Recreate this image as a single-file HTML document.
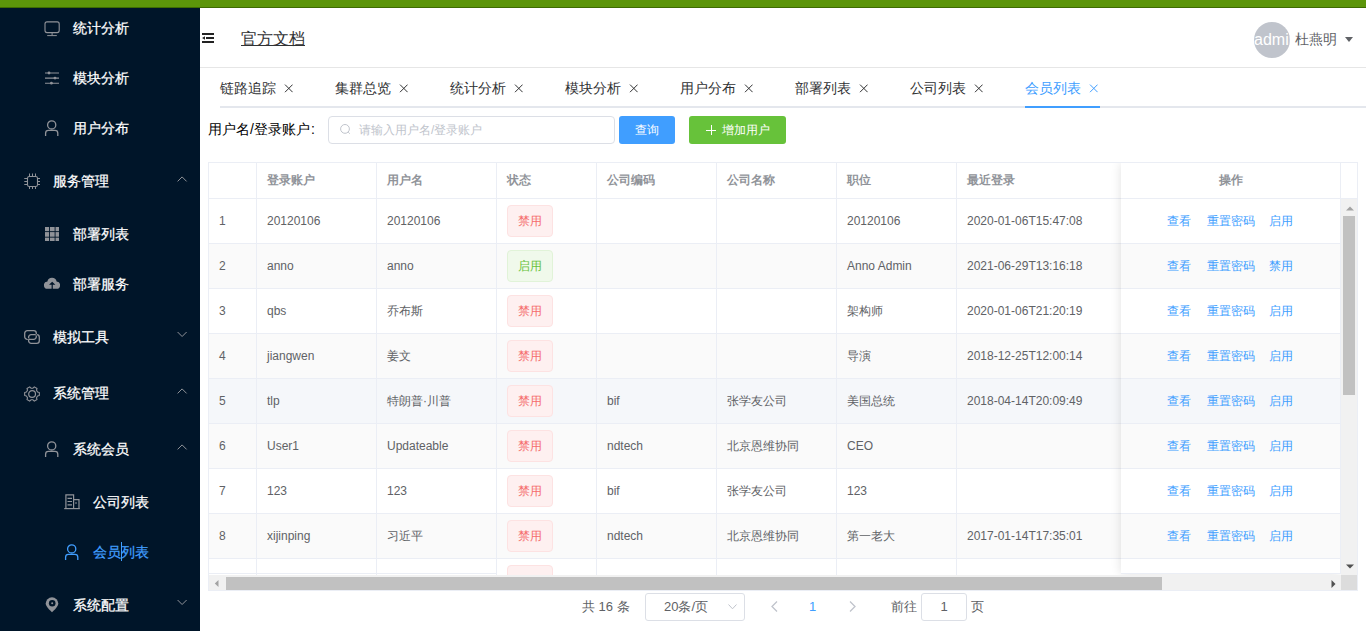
<!DOCTYPE html><html><head><meta charset="utf-8"><style>
*{box-sizing:border-box;margin:0;padding:0}
html,body{width:1366px;height:631px;overflow:hidden;background:#fff;font-family:"Liberation Sans",sans-serif;color:#606266}
.abs{position:absolute}
svg{display:block}
#topbar{left:0;top:0;width:1366px;height:8px;background:#5c950a;border-bottom:1px solid #3e6b02}
#side{left:0;top:8px;width:200px;height:623px;background:#001529;overflow:hidden}
.mt{position:absolute;font-size:14px;line-height:20px;color:#fff;white-space:nowrap;-webkit-text-stroke:0.25px #fff}
.mt.on{-webkit-text-stroke:0.25px #409eff}
.mt.on{color:#409eff}
.ic{position:absolute}
#header{left:200px;top:8px;width:1166px;height:60px;border-bottom:1px solid #e6e6e6}
.tab{position:absolute;top:78px;font-size:14px;line-height:20px;color:#303133;white-space:nowrap}
.tab.on{color:#409eff}
.cell{position:absolute;font-size:12px;line-height:20px;white-space:nowrap;color:#606266}
.th{position:absolute;font-size:12px;line-height:20px;white-space:nowrap;color:#909399;font-weight:bold}
.tag{position:absolute;width:46px;height:32px;border:1px solid #fde2e2;background:#fef0f0;color:#f56c6c;border-radius:4px;font-size:12px;line-height:30px;text-align:center}
.tag.ok{border-color:#e1f3d8;background:#f0f9eb;color:#67c23a}
.lnk{position:absolute;font-size:12px;line-height:20px;color:#409eff;white-space:nowrap}
</style></head><body>
<div id="topbar" class="abs"></div>
<div id="side" class="abs">
<div class="mt" style="left:73px;top:10px">统计分析</div>
<svg class="ic" style="left:44px;top:12px" width="16" height="17" viewBox="0 0 16 17"><rect x="1" y="1.9" width="14.2" height="10.7" rx="2" fill="none" stroke="#909399" stroke-width="1.1"/><path d="M8.1 12.6v2.6M3.2 15.6h9.6" stroke="#909399" stroke-width="1"/></svg>
<div class="mt" style="left:73px;top:60px">模块分析</div>
<svg class="ic" style="left:44px;top:62px" width="16" height="16" viewBox="0 0 16 16"><path d="M1 3h14M1 8.1h14M1 13.2h14" stroke="#909399" stroke-width="1.1"/><circle cx="5" cy="3" r="1.4" fill="#909399"/><circle cx="11" cy="8.1" r="1.4" fill="#909399"/><circle cx="7.4" cy="13.2" r="1.4" fill="#909399"/></svg>
<div class="mt" style="left:73px;top:110px">用户分布</div>
<svg class="ic" style="left:44px;top:112px" width="16" height="16" viewBox="0 0 16 16"><circle cx="7.7" cy="4.9" r="4.1" fill="none" stroke="#909399" stroke-width="1.3"/><path d="M1.6 16V13.2a2.8 2.8 0 0 1 2.8-2.8h6.6a2.8 2.8 0 0 1 2.8 2.8V16" fill="none" stroke="#909399" stroke-width="1.3"/></svg>
<div class="mt" style="left:53px;top:163px">服务管理</div>
<svg class="ic" style="left:24px;top:165px" width="16" height="16" viewBox="0 0 16 16"><rect x="3.5" y="3.5" width="10" height="10" rx="1.8" fill="none" stroke="#909399" stroke-width="1.1"/><path d="M5.5 0.5v3M8.5 0.5v3M11.5 0.5v3M5.5 13.5v3M8.5 13.5v3M11.5 13.5v3M0.3 5.5h3.2M0.3 8.5h3.2M0.3 11.5h3.2M13.5 5.5h3M13.5 8.5h3M13.5 11.5h3" stroke="#909399" stroke-width="1"/></svg>
<svg class="ic" style="left:177px;top:168px" width="11" height="7" viewBox="0 0 11 7"><path d="M0.6 5.4L5.1 0.9L9.6 5.4" fill="none" stroke="#909399" stroke-width="1"/></svg>
<div class="mt" style="left:73px;top:216px">部署列表</div>
<svg class="ic" style="left:45px;top:219px" width="14" height="14" viewBox="0 0 14 14"><rect x="0" y="0" width="14.3" height="14.3" fill="#909399"/><path d="M4.5 0v14.3M10.1 0v14.3M0 4.6h14.3M0 10.2h14.3" stroke="#001529" stroke-width="0.9"/></svg>
<div class="mt" style="left:73px;top:266px">部署服务</div>
<svg class="ic" style="left:44px;top:268px" width="16" height="13" viewBox="0 0 16 13"><path d="M3.6 12.8A3.6 3.6 0 0 1 3.4 5.6 4.7 4.7 0 0 1 12.6 5.6 3.6 3.6 0 0 1 12.4 12.8z" fill="#909399"/><path d="M8.2 5.8L5 8.8h2.6v4.2h1.2V8.8h2.6z" fill="#001529"/></svg>
<div class="mt" style="left:53px;top:319px">模拟工具</div>
<svg class="ic" style="left:24px;top:322px" width="16" height="14" viewBox="0 0 16 14"><rect x="0.7" y="0.7" width="11.6" height="8.6" rx="2.6" fill="none" stroke="#909399" stroke-width="1.3"/><rect x="4.6" y="4.7" width="10.7" height="8.6" rx="2.6" fill="none" stroke="#909399" stroke-width="1.3"/><path d="M3.2 8.6h1.4M12.3 4.3v1.2" stroke="#001529" stroke-width="1.2"/></svg>
<svg class="ic" style="left:177px;top:323px" width="11" height="7" viewBox="0 0 11 7"><path d="M0.6 1L5.1 5.5L9.6 1" fill="none" stroke="#909399" stroke-width="1"/></svg>
<div class="mt" style="left:53px;top:375px">系统管理</div>
<svg class="ic" style="left:24px;top:378px" width="16" height="16" viewBox="0 0 16 16"><path d="M15.34 6.44L15.34 9.56L13.54 10.02L12.52 11.79L13.02 13.57L10.32 15.13L9.02 13.81L6.98 13.81L5.68 15.13L2.98 13.57L3.48 11.79L2.46 10.02L0.66 9.56L0.66 6.44L2.46 5.98L3.48 4.21L2.98 2.43L5.68 0.87L6.98 2.19L9.02 2.19L10.32 0.87L13.02 2.43L12.52 4.21L13.54 5.98z" fill="none" stroke="#909399" stroke-width="1.1" stroke-linejoin="round"/><circle cx="8.1" cy="8" r="3.4" fill="none" stroke="#909399" stroke-width="1.2"/></svg>
<svg class="ic" style="left:177px;top:380px" width="11" height="7" viewBox="0 0 11 7"><path d="M0.6 5.4L5.1 0.9L9.6 5.4" fill="none" stroke="#909399" stroke-width="1"/></svg>
<div class="mt" style="left:73px;top:431px">系统会员</div>
<svg class="ic" style="left:44px;top:433px" width="16" height="16" viewBox="0 0 16 16"><circle cx="7.7" cy="4.9" r="4.1" fill="none" stroke="#909399" stroke-width="1.3"/><path d="M1.6 16V13.2a2.8 2.8 0 0 1 2.8-2.8h6.6a2.8 2.8 0 0 1 2.8 2.8V16" fill="none" stroke="#909399" stroke-width="1.3"/></svg>
<svg class="ic" style="left:177px;top:436px" width="11" height="7" viewBox="0 0 11 7"><path d="M0.6 5.4L5.1 0.9L9.6 5.4" fill="none" stroke="#909399" stroke-width="1"/></svg>
<div class="mt" style="left:93px;top:484px">公司列表</div>
<svg class="ic" style="left:64px;top:486px" width="16" height="16" viewBox="0 0 16 16"><path d="M0.2 14.6H15.8" stroke="#909399" stroke-width="1.2"/><path d="M1.9 14.5V0.8H9.6V14.5M9.6 5.6H15V14.5" fill="none" stroke="#909399" stroke-width="1.2"/><path d="M3.5 4.4H8M3.5 7.5H8M3.5 10.9H8M11 9H13" stroke="#909399" stroke-width="1.1"/></svg>
<div class="mt on" style="left:93px;top:534px">会员列表</div>
<svg class="ic" style="left:64px;top:536px" width="16" height="16" viewBox="0 0 16 16"><circle cx="7.7" cy="4.9" r="4.1" fill="none" stroke="#409eff" stroke-width="1.3"/><path d="M1.6 16V13.2a2.8 2.8 0 0 1 2.8-2.8h6.6a2.8 2.8 0 0 1 2.8 2.8V16" fill="none" stroke="#409eff" stroke-width="1.3"/></svg>
<div class="mt" style="left:73px;top:587px">系统配置</div>
<svg class="ic" style="left:45px;top:589px" width="14" height="16" viewBox="0 0 14 16"><path d="M7 0.3a6.3 6.3 0 0 1 6.3 6.3c0 3.6-6.3 8.6-6.3 8.6S0.7 10.2 0.7 6.6A6.3 6.3 0 0 1 7 0.3z" fill="#909399"/><circle cx="7.2" cy="6.2" r="3.3" fill="#001529"/><circle cx="7.2" cy="6.2" r="1" fill="#909399"/></svg>
<svg class="ic" style="left:177px;top:591px" width="11" height="7" viewBox="0 0 11 7"><path d="M0.6 1L5.1 5.5L9.6 1" fill="none" stroke="#909399" stroke-width="1"/></svg>
<div class="abs" style="left:121px;top:534px;width:1px;height:19px;background:#409eff"></div>
</div>
<div id="header" class="abs"></div>
<svg class="abs" style="left:202px;top:33px" width="12" height="10" viewBox="0 0 12 10"><path d="M0 0h12v2H0zM4 4h8v2H4zM0 8h12v2H0z" fill="#222"/><path d="M0 5L3 3.2v3.6z" fill="#222"/></svg>
<div class="abs" style="left:241px;top:29px;font-size:16px;line-height:20px;color:#303133;text-decoration:underline;white-space:nowrap">官方文档</div>
<div class="abs" style="left:1254px;top:22px;width:36px;height:36px;border-radius:50%;background:#c0c4cc;overflow:hidden;color:#fff;font-size:16px;line-height:36px;text-align:center;white-space:nowrap"><span style="position:absolute;left:0;top:0">admin</span></div>
<div class="abs" style="left:1295px;top:29px;font-size:14px;line-height:20px;color:#606266;white-space:nowrap">杜燕明</div>
<svg class="abs" style="left:1345px;top:37px" width="8" height="5" viewBox="0 0 8 5"><path d="M0 0h8L4 5z" fill="#606266"/></svg>
<div class="tab" style="left:220px">链路追踪</div>
<svg class="abs" style="left:284px;top:84px" width="9" height="9" viewBox="0 0 9 9"><path d="M1 0.6L8.6 8.2M8.6 0.6L1 8.2" stroke="#303133" stroke-width="1"/></svg>
<div class="tab" style="left:335px">集群总览</div>
<svg class="abs" style="left:399px;top:84px" width="9" height="9" viewBox="0 0 9 9"><path d="M1 0.6L8.6 8.2M8.6 0.6L1 8.2" stroke="#303133" stroke-width="1"/></svg>
<div class="tab" style="left:450px">统计分析</div>
<svg class="abs" style="left:514px;top:84px" width="9" height="9" viewBox="0 0 9 9"><path d="M1 0.6L8.6 8.2M8.6 0.6L1 8.2" stroke="#303133" stroke-width="1"/></svg>
<div class="tab" style="left:565px">模块分析</div>
<svg class="abs" style="left:629px;top:84px" width="9" height="9" viewBox="0 0 9 9"><path d="M1 0.6L8.6 8.2M8.6 0.6L1 8.2" stroke="#303133" stroke-width="1"/></svg>
<div class="tab" style="left:680px">用户分布</div>
<svg class="abs" style="left:744px;top:84px" width="9" height="9" viewBox="0 0 9 9"><path d="M1 0.6L8.6 8.2M8.6 0.6L1 8.2" stroke="#303133" stroke-width="1"/></svg>
<div class="tab" style="left:795px">部署列表</div>
<svg class="abs" style="left:859px;top:84px" width="9" height="9" viewBox="0 0 9 9"><path d="M1 0.6L8.6 8.2M8.6 0.6L1 8.2" stroke="#303133" stroke-width="1"/></svg>
<div class="tab" style="left:910px">公司列表</div>
<svg class="abs" style="left:974px;top:84px" width="9" height="9" viewBox="0 0 9 9"><path d="M1 0.6L8.6 8.2M8.6 0.6L1 8.2" stroke="#303133" stroke-width="1"/></svg>
<div class="tab on" style="left:1025px">会员列表</div>
<svg class="abs" style="left:1089px;top:84px" width="9" height="9" viewBox="0 0 9 9"><path d="M1 0.6L8.6 8.2M8.6 0.6L1 8.2" stroke="#409eff" stroke-width="1"/></svg>
<div class="abs" style="left:220px;top:106px;width:1146px;height:2px;background:#e4e7ed"></div>
<div class="abs" style="left:1025px;top:106px;width:75px;height:2px;background:#409eff"></div>
<div class="abs" style="left:208px;top:119px;font-size:14px;line-height:20px;color:#000;white-space:nowrap">用户名/登录账户<span style="margin-left:1px">:</span></div>
<div class="abs" style="left:328px;top:116px;width:287px;height:28px;border:1px solid #dcdfe6;border-radius:4px"></div>
<svg class="abs" style="left:340px;top:124px" width="12" height="12" viewBox="0 0 12 12"><circle cx="5" cy="4.9" r="4.4" fill="none" stroke="#c0c4cc" stroke-width="1"/><path d="M8.2 8.1L9.8 9.7" stroke="#c0c4cc" stroke-width="1"/></svg>
<div class="abs" style="left:359px;top:120px;font-size:12px;line-height:20px;color:#c0c4cc;white-space:nowrap">请输入用户名/登录账户</div>
<div class="abs" style="left:619px;top:116px;width:56px;height:28px;background:#409eff;border-radius:3px;color:#fff;font-size:12px;line-height:28px;text-align:center">查询</div>
<div class="abs" style="left:689px;top:116px;width:97px;height:28px;background:#67c23a;border-radius:3px"></div>
<svg class="abs" style="left:706px;top:125px" width="10" height="10" viewBox="0 0 10 10"><path d="M5.5 0v10M0 5.5h10" stroke="#fff" stroke-width="1"/></svg>
<div class="abs" style="left:722px;top:120px;font-size:12px;line-height:20px;color:#fff;white-space:nowrap">增加用户</div>
<div class="abs" style="left:208px;top:162px;width:1150px;height:429px;border:1px solid #ebeef5;overflow:hidden">
<div class="abs" style="left:0;top:36px;width:1150px;height:45px;background:#ffffff;border-bottom:1px solid #ebeef5"></div>
<div class="abs" style="left:0;top:81px;width:1150px;height:45px;background:#fafafa;border-bottom:1px solid #ebeef5"></div>
<div class="abs" style="left:0;top:126px;width:1150px;height:45px;background:#ffffff;border-bottom:1px solid #ebeef5"></div>
<div class="abs" style="left:0;top:171px;width:1150px;height:45px;background:#fafafa;border-bottom:1px solid #ebeef5"></div>
<div class="abs" style="left:0;top:216px;width:1150px;height:45px;background:#f5f7fa;border-bottom:1px solid #ebeef5"></div>
<div class="abs" style="left:0;top:261px;width:1150px;height:45px;background:#fafafa;border-bottom:1px solid #ebeef5"></div>
<div class="abs" style="left:0;top:306px;width:1150px;height:45px;background:#ffffff;border-bottom:1px solid #ebeef5"></div>
<div class="abs" style="left:0;top:351px;width:1150px;height:45px;background:#fafafa;border-bottom:1px solid #ebeef5"></div>
<div class="abs" style="left:0;top:396px;width:1150px;height:45px;background:#ffffff;border-bottom:1px solid #ebeef5"></div>
<div class="abs" style="left:47px;top:0;width:1px;height:420px;background:#ebeef5"></div>
<div class="abs" style="left:167px;top:0;width:1px;height:420px;background:#ebeef5"></div>
<div class="abs" style="left:287px;top:0;width:1px;height:420px;background:#ebeef5"></div>
<div class="abs" style="left:387px;top:0;width:1px;height:420px;background:#ebeef5"></div>
<div class="abs" style="left:507px;top:0;width:1px;height:420px;background:#ebeef5"></div>
<div class="abs" style="left:627px;top:0;width:1px;height:420px;background:#ebeef5"></div>
<div class="abs" style="left:747px;top:0;width:1px;height:420px;background:#ebeef5"></div>
<div class="abs" style="left:0;top:35px;width:1150px;height:1px;background:#ebeef5"></div>
<div class="th" style="left:58px;top:7px">登录账户</div>
<div class="th" style="left:178px;top:7px">用户名</div>
<div class="th" style="left:298px;top:7px">状态</div>
<div class="th" style="left:398px;top:7px">公司编码</div>
<div class="th" style="left:518px;top:7px">公司名称</div>
<div class="th" style="left:638px;top:7px">职位</div>
<div class="th" style="left:758px;top:7px">最近登录</div>
<div class="cell" style="left:10px;top:48px">1</div>
<div class="cell" style="left:58px;top:48px">20120106</div>
<div class="cell" style="left:178px;top:48px">20120106</div>
<div class="tag" style="left:298px;top:42px">禁用</div>
<div class="cell" style="left:638px;top:48px">20120106</div>
<div class="cell" style="left:758px;top:48px">2020-01-06T15:47:08</div>
<div class="cell" style="left:10px;top:93px">2</div>
<div class="cell" style="left:58px;top:93px">anno</div>
<div class="cell" style="left:178px;top:93px">anno</div>
<div class="tag ok" style="left:298px;top:87px">启用</div>
<div class="cell" style="left:638px;top:93px">Anno Admin</div>
<div class="cell" style="left:758px;top:93px">2021-06-29T13:16:18</div>
<div class="cell" style="left:10px;top:138px">3</div>
<div class="cell" style="left:58px;top:138px">qbs</div>
<div class="cell" style="left:178px;top:138px">乔布斯</div>
<div class="tag" style="left:298px;top:132px">禁用</div>
<div class="cell" style="left:638px;top:138px">架构师</div>
<div class="cell" style="left:758px;top:138px">2020-01-06T21:20:19</div>
<div class="cell" style="left:10px;top:183px">4</div>
<div class="cell" style="left:58px;top:183px">jiangwen</div>
<div class="cell" style="left:178px;top:183px">姜文</div>
<div class="tag" style="left:298px;top:177px">禁用</div>
<div class="cell" style="left:638px;top:183px">导演</div>
<div class="cell" style="left:758px;top:183px">2018-12-25T12:00:14</div>
<div class="cell" style="left:10px;top:228px">5</div>
<div class="cell" style="left:58px;top:228px">tlp</div>
<div class="cell" style="left:178px;top:228px">特朗普·川普</div>
<div class="tag" style="left:298px;top:222px">禁用</div>
<div class="cell" style="left:398px;top:228px">bif</div>
<div class="cell" style="left:518px;top:228px">张学友公司</div>
<div class="cell" style="left:638px;top:228px">美国总统</div>
<div class="cell" style="left:758px;top:228px">2018-04-14T20:09:49</div>
<div class="cell" style="left:10px;top:273px">6</div>
<div class="cell" style="left:58px;top:273px">User1</div>
<div class="cell" style="left:178px;top:273px">Updateable</div>
<div class="tag" style="left:298px;top:267px">禁用</div>
<div class="cell" style="left:398px;top:273px">ndtech</div>
<div class="cell" style="left:518px;top:273px">北京恩维协同</div>
<div class="cell" style="left:638px;top:273px">CEO</div>
<div class="cell" style="left:10px;top:318px">7</div>
<div class="cell" style="left:58px;top:318px">123</div>
<div class="cell" style="left:178px;top:318px">123</div>
<div class="tag" style="left:298px;top:312px">禁用</div>
<div class="cell" style="left:398px;top:318px">bif</div>
<div class="cell" style="left:518px;top:318px">张学友公司</div>
<div class="cell" style="left:638px;top:318px">123</div>
<div class="cell" style="left:10px;top:363px">8</div>
<div class="cell" style="left:58px;top:363px">xijinping</div>
<div class="cell" style="left:178px;top:363px">习近平</div>
<div class="tag" style="left:298px;top:357px">禁用</div>
<div class="cell" style="left:398px;top:363px">ndtech</div>
<div class="cell" style="left:518px;top:363px">北京恩维协同</div>
<div class="cell" style="left:638px;top:363px">第一老大</div>
<div class="cell" style="left:758px;top:363px">2017-01-14T17:35:01</div>
<div class="tag" style="left:298px;top:402px">禁用</div>
<div class="abs" style="left:0;top:410px;width:287px;height:1px;background:#ebeef5"></div>
<div class="abs" style="left:912px;top:0;width:220px;height:411px;background:#fff;box-shadow:0 0 10px rgba(0,0,0,.12);overflow:hidden">
<div class="abs" style="left:0;top:0;width:220px;height:36px;border-bottom:1px solid #ebeef5;border-right:1px solid #ebeef5"></div>
<div class="th" style="left:0;width:219px;text-align:center;top:7px">操作</div>
<div class="abs" style="left:0;top:36px;width:220px;height:45px;background:#ffffff;border-bottom:1px solid #ebeef5;border-right:1px solid #ebeef5"></div>
<div class="lnk" style="left:46px;top:48px">查看</div>
<div class="lnk" style="left:86px;top:48px">重置密码</div>
<div class="lnk" style="left:148px;top:48px">启用</div>
<div class="abs" style="left:0;top:81px;width:220px;height:45px;background:#fafafa;border-bottom:1px solid #ebeef5;border-right:1px solid #ebeef5"></div>
<div class="lnk" style="left:46px;top:93px">查看</div>
<div class="lnk" style="left:86px;top:93px">重置密码</div>
<div class="lnk" style="left:148px;top:93px">禁用</div>
<div class="abs" style="left:0;top:126px;width:220px;height:45px;background:#ffffff;border-bottom:1px solid #ebeef5;border-right:1px solid #ebeef5"></div>
<div class="lnk" style="left:46px;top:138px">查看</div>
<div class="lnk" style="left:86px;top:138px">重置密码</div>
<div class="lnk" style="left:148px;top:138px">启用</div>
<div class="abs" style="left:0;top:171px;width:220px;height:45px;background:#fafafa;border-bottom:1px solid #ebeef5;border-right:1px solid #ebeef5"></div>
<div class="lnk" style="left:46px;top:183px">查看</div>
<div class="lnk" style="left:86px;top:183px">重置密码</div>
<div class="lnk" style="left:148px;top:183px">启用</div>
<div class="abs" style="left:0;top:216px;width:220px;height:45px;background:#f5f7fa;border-bottom:1px solid #ebeef5;border-right:1px solid #ebeef5"></div>
<div class="lnk" style="left:46px;top:228px">查看</div>
<div class="lnk" style="left:86px;top:228px">重置密码</div>
<div class="lnk" style="left:148px;top:228px">启用</div>
<div class="abs" style="left:0;top:261px;width:220px;height:45px;background:#fafafa;border-bottom:1px solid #ebeef5;border-right:1px solid #ebeef5"></div>
<div class="lnk" style="left:46px;top:273px">查看</div>
<div class="lnk" style="left:86px;top:273px">重置密码</div>
<div class="lnk" style="left:148px;top:273px">启用</div>
<div class="abs" style="left:0;top:306px;width:220px;height:45px;background:#ffffff;border-bottom:1px solid #ebeef5;border-right:1px solid #ebeef5"></div>
<div class="lnk" style="left:46px;top:318px">查看</div>
<div class="lnk" style="left:86px;top:318px">重置密码</div>
<div class="lnk" style="left:148px;top:318px">启用</div>
<div class="abs" style="left:0;top:351px;width:220px;height:45px;background:#fafafa;border-bottom:1px solid #ebeef5;border-right:1px solid #ebeef5"></div>
<div class="lnk" style="left:46px;top:363px">查看</div>
<div class="lnk" style="left:86px;top:363px">重置密码</div>
<div class="lnk" style="left:148px;top:363px">启用</div>
<div class="abs" style="left:0;top:396px;width:220px;height:45px;background:#ffffff;border-bottom:1px solid #ebeef5;border-right:1px solid #ebeef5"></div>
<div class="abs" style="left:0;top:410px;width:220px;height:1px;background:#ebeef5"></div>
</div>
<div class="abs" style="left:1132px;top:0;width:17px;height:36px;background:#fff;border-bottom:1px solid #ebeef5"></div>
<div class="abs" style="left:1132px;top:36px;width:16px;height:376px;background:#f1f1f1"></div>
<div class="abs" style="left:1134px;top:53px;width:12px;height:179px;background:#c1c1c1"></div>
<svg class="abs" style="left:1137px;top:43px" width="8" height="5" viewBox="0 0 8 5"><path d="M0 4.5L4 0.5L8 4.5z" fill="#a3a3a3"/></svg>
<svg class="abs" style="left:1137px;top:401px" width="8" height="5" viewBox="0 0 8 5"><path d="M0 0.5L4 4.5L8 0.5z" fill="#505050"/></svg>
<div class="abs" style="left:0;top:412px;width:1132px;height:15px;background:#f1f1f1"></div>
<div class="abs" style="left:17px;top:414px;width:936px;height:13px;background:#c1c1c1"></div>
<svg class="abs" style="left:5px;top:417px" width="5" height="7" viewBox="0 0 5 7"><path d="M4.5 0L0.8 3.5L4.5 7z" fill="#a3a3a3"/></svg>
<svg class="abs" style="left:1122px;top:417px" width="5" height="8" viewBox="0 0 5 8"><path d="M0.5 0L4.5 4L0.5 8z" fill="#505050"/></svg>
<div class="abs" style="left:1132px;top:412px;width:16px;height:15px;background:#dcdcdc"></div>
</div>
<div class="abs" style="left:582px;top:597px;font-size:13px;line-height:20px;color:#606266;white-space:nowrap">共 16 条</div>
<div class="abs" style="left:645px;top:593px;width:100px;height:28px;border:1px solid #dcdfe6;border-radius:3px"></div>
<div class="abs" style="left:664px;top:597px;font-size:13px;line-height:20px;color:#606266;white-space:nowrap">20条/页</div>
<svg class="abs" style="left:728px;top:604px" width="9" height="6" viewBox="0 0 9 6"><path d="M0.5 0.5L4.5 4.8L8.5 0.5" fill="none" stroke="#c0c4cc" stroke-width="1"/></svg>
<svg class="abs" style="left:771px;top:601px" width="7" height="11" viewBox="0 0 7 11"><path d="M6 0.5L1 5.5L6 10.5" fill="none" stroke="#c0c4cc" stroke-width="1.3"/></svg>
<div class="abs" style="left:809px;top:597px;font-size:13px;line-height:20px;color:#409eff;white-space:nowrap">1</div>
<svg class="abs" style="left:849px;top:601px" width="7" height="11" viewBox="0 0 7 11"><path d="M1 0.5L6 5.5L1 10.5" fill="none" stroke="#c0c4cc" stroke-width="1.3"/></svg>
<div class="abs" style="left:891px;top:597px;font-size:13px;line-height:20px;color:#606266;white-space:nowrap">前往</div>
<div class="abs" style="left:921px;top:593px;width:46px;height:28px;border:1px solid #dcdfe6;border-radius:3px;font-size:13px;line-height:26px;text-align:center;color:#606266">1</div>
<div class="abs" style="left:971px;top:597px;font-size:13px;line-height:20px;color:#606266;white-space:nowrap">页</div>
</body></html>
